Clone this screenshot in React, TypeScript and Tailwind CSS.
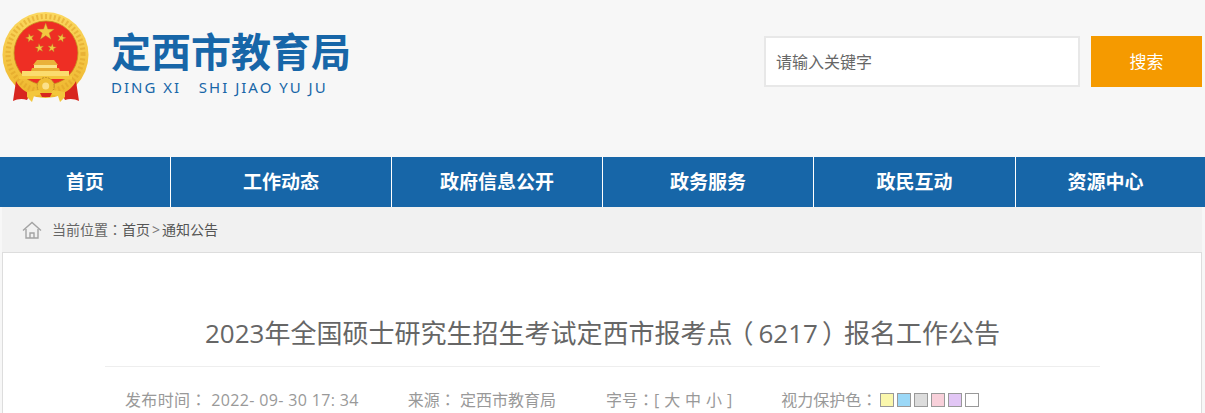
const navItems = [
  { label: '首页', width: 'w-[171px]' },
  { label: '工作动态', width: 'w-[221px]' },
  { label: '政府信息公开', width: 'w-[211px]' },
  { label: '政务服务', width: 'w-[211px]' },
  { label: '政民互动', width: 'w-[202px]' },
  { label: '资源中心', width: 'w-[179px]' },
]

const eyeColors = ['bg-[#faf7ac]', 'bg-[#9bd8f7]', 'bg-[#dcdcdc]', 'bg-[#f8d0da]', 'bg-[#e2c6f5]', 'bg-white']

const Star = ({ x, y, r, rot = 0 }: { x: number; y: number; r: number; rot?: number }) => {
  const pts = Array.from({ length: 10 }, (_, i) => {
    const a = ((i * 36 - 90 + rot) * Math.PI) / 180
    const d = i % 2 ? r * 0.4 : r
    return `${(x + d * Math.cos(a)).toFixed(2)},${(y + d * Math.sin(a)).toFixed(2)}`
  }).join(' ')
  return <polygon points={pts} fill="#f3c840" stroke="#b9862a" strokeWidth="0.4" />
}

const Emblem = () => (
  <svg width="92" height="94" viewBox="0 10 92 94" className="shrink-0">
    <defs>
      <linearGradient id="ring" x1="0" y1="0" x2="0" y2="1">
        <stop offset="0" stopColor="#fbd860" />
        <stop offset="1" stopColor="#eeb62c" />
      </linearGradient>
    </defs>
    <circle cx="45.5" cy="55" r="43" fill="url(#ring)" />
    <circle cx="45.5" cy="54" r="37.5" fill="none" stroke="#dfa126" strokeWidth="5" strokeDasharray="2 2.4" opacity="0.55" />
    <circle cx="46" cy="53" r="32" fill="#ee2e24" stroke="#c8901f" strokeWidth="0.8" />
    <Star x={45.7} y={32} r={9} />
    <Star x={30} y={38} r={4.4} rot={-15} />
    <Star x={61.5} y={38} r={4.4} rot={15} />
    <Star x={39.5} y={48} r={4.4} rot={-8} />
    <Star x={52} y={48} r={4.4} rot={8} />
    {/* gate */}
    <path d="M37 60 L54 60 L58 65 L33 65 Z" fill="#eab23a" />
    <rect x="34" y="65" width="23" height="3" fill="#fbe38a" />
    <path d="M32 68 L59 68 L60 71 L31 71 Z" fill="#e9ae34" />
    <rect x="22" y="71" width="47" height="5" fill="#fbdc6e" />
    <rect x="19" y="76" width="53" height="3" fill="#f4c63c" />
    {/* red ribbons */}
    <path d="M16 81 C19 87 24 91 30 94 L27 100 C22 98 17 99 13 101 Z" fill="#d8261f" />
    <path d="M76 81 C73 87 68 91 62 94 L65 100 C70 98 75 99 79 101 Z" fill="#d8261f" />
    {/* gear and gold ribbon */}
    <circle cx="45.7" cy="86" r="8.5" fill="#efbd33" stroke="#c08a28" strokeWidth="1" strokeDasharray="2 1" />
    <circle cx="45.7" cy="86" r="3.5" fill="#fbe08a" />
    <path d="M27 92 L39 90 L43 94 L34 96 L32 102 L27 97 Z" fill="#f3c73c" />
    <path d="M65 92 L53 90 L49 94 L58 96 L60 102 L65 97 Z" fill="#f3c73c" />
    <path d="M40 93 H52 L50 97 H42 Z" fill="#d8261f" />
  </svg>
)

const HomeIcon = () => (
  <svg width="20" height="18" viewBox="0 0 20 18" fill="none" stroke="#a3a3a3" strokeWidth="1.4" className="shrink-0">
    <path d="M1 9.5 L10 1.5 L19 9.5" />
    <path d="M4 8 V17 H16 V8" />
    <path d="M8 17 V12 H12 V17" />
  </svg>
)

// 全角标点，居中的字形
const Punct = ({ c }: { c: string }) => <span className="font-['Noto_Sans_CJK_TC']">{c}</span>

export default function App() {
  return (
    <div
      className="h-[413px] overflow-hidden bg-[#f7f7f7]"
      style={{ fontFamily: '"Open Sans", "Noto Sans CJK SC", sans-serif' }}
    >
      <header className="h-[157px] flex justify-between">
        <div className="flex pt-[10px]">
          <Emblem />
          <div className="ml-[19px] pt-[17px]">
            <div className="text-[40px] leading-[50px] font-bold text-[#1766a8] whitespace-nowrap">定西市教育局</div>
            <div className="text-[15px] leading-[20px] tracking-[2px] text-[#1766a8] whitespace-pre font-['Noto_Sans',sans-serif]">
              DING XI{'   '}SHI JIAO YU JU
            </div>
          </div>
        </div>
        <div className="flex pt-9 pr-[3px]">
          <div className="w-[316px] h-[51px] bg-white border-2 border-[#e8e8e8] pl-[10px] flex items-center text-[16px] text-[#666]">
            请输入关键字
          </div>
          <button className="ml-[11px] w-[111px] h-[51px] bg-[#f59a00] text-white text-[17px]">搜索</button>
        </div>
      </header>

      <nav className="h-[50px] bg-[#1766a8] flex">
        {navItems.map((item, i) => (
          <div
            key={item.label}
            className={`${item.width} flex items-center justify-center pt-[1px] text-white text-[19px] font-bold ${
              i < navItems.length - 1 ? 'border-r border-white' : ''
            }`}
          >
            {item.label}
          </div>
        ))}
      </nav>

      <div className="mx-[2px] w-[1200px]">
        <div className="h-[45px] bg-[#f1f1f1] flex items-center pl-5 text-[14px] text-[#666]">
          <HomeIcon />
          <span className="ml-[10px]">当前位置<Punct c="：" /></span>
          <span className="text-[#555]">首页</span>
          <span className="mx-[2px] text-[#777]">&gt;</span>
          <span className="text-[#555]">通知公告</span>
        </div>

        <div className="bg-white border border-[#dddddd] h-[300px] pl-[102px] pr-[101px]">
          <h1 className="mt-[62px] text-[26px] leading-[36px] text-[#666] text-center whitespace-nowrap">
            2023年全国硕士研究生招生考试定西市报考点
            <span className="ml-[8px] mr-[5px] [font-feature-settings:'halt']">（</span>
            6217
            <span className="ml-[4px] mr-[9px] [font-feature-settings:'halt']">）</span>
            报名工作公告
          </h1>
          <div className="mt-[15px] border-t border-[#eeeeee] pl-5 pt-5 flex items-center text-[16px] leading-[24px] text-[#999] whitespace-pre">
            <span className="tracking-[0.35px]">发布时间<Punct c="：" /> 2022- 09- 30 17: 34</span>
            <span className="ml-[49px]">来源<Punct c="：" /> 定西市教育局</span>
            <span className="ml-[50px] [word-spacing:0.75px]">字号<Punct c="：" />[ 大 中 小 ]</span>
            <span className="ml-[49px]">视力保护色<Punct c="：" /></span>
            <div className="flex gap-[3px] ml-[3px]">
              {eyeColors.map((c) => (
                <span key={c} className={`w-[14px] h-[14px] border border-[#999] ${c}`} />
              ))}
            </div>
          </div>
        </div>
      </div>
    </div>
  )
}
